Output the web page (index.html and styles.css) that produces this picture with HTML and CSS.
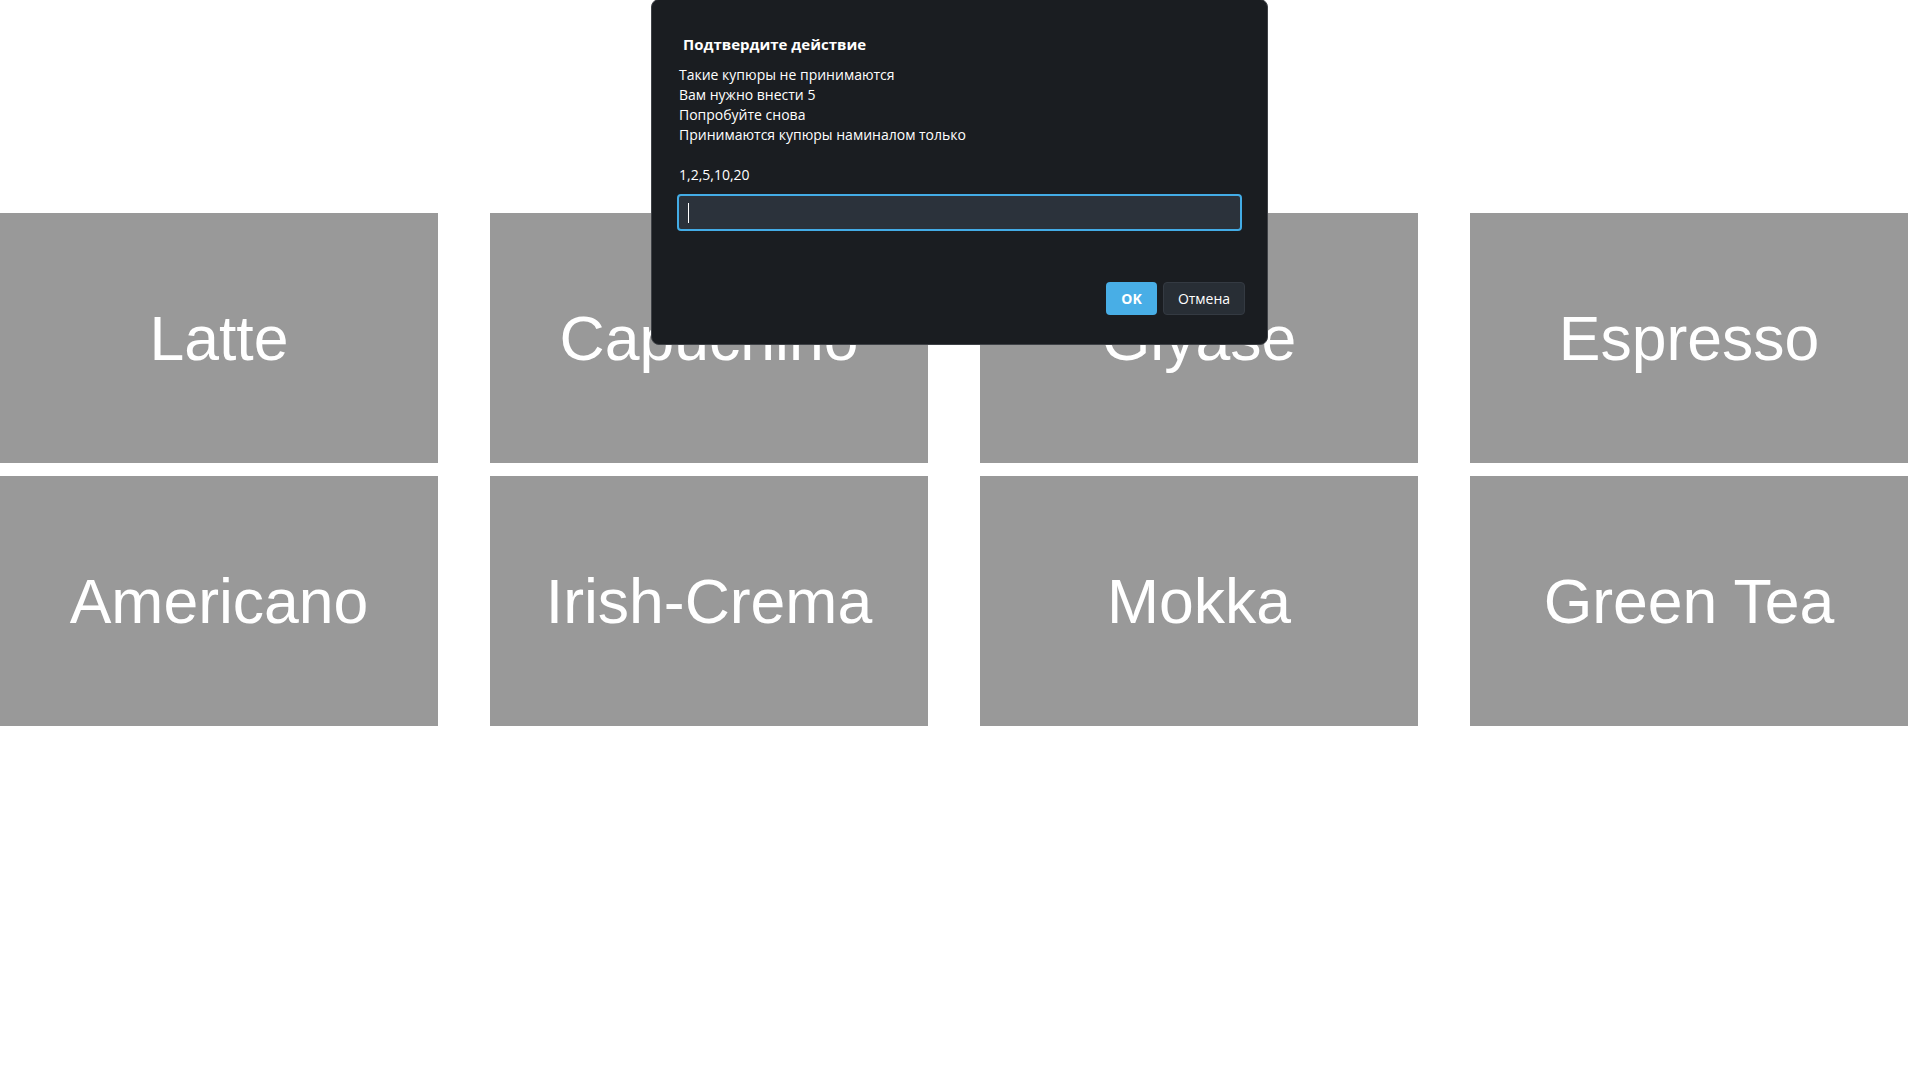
FILE: index.html
```html
<!DOCTYPE html>
<html lang="ru">
<head>
<meta charset="utf-8">
<title>Coffee</title>
<link rel="stylesheet" href="styles.css">
</head>
<body>
<main class="menu">
  <div class="tile">Latte</div>
  <div class="tile">Capuchino</div>
  <div class="tile">Glyase</div>
  <div class="tile">Espresso</div>
  <div class="tile">Americano</div>
  <div class="tile">Irish-Crema</div>
  <div class="tile">Mokka</div>
  <div class="tile">Green Tea</div>
</main>

<div class="dialog" role="dialog">
  <div class="dialog-title">Подтвердите действие</div>
  <div class="dialog-message">Такие купюры не принимаются
Вам нужно внести 5
Попробуйте снова
Принимаются купюры наминалом только

1,2,5,10,20</div>
  <div class="field"><span class="caret"></span></div>
  <div class="dialog-buttons">
    <button class="btn btn-ok">OK</button>
    <button class="btn btn-cancel">Отмена</button>
  </div>
</div>
</body>
</html>
```
FILE: styles.css
```css
html, body {
  margin: 0;
  padding: 0;
  background: #ffffff;
}

.menu {
  padding-top: 213px;
  display: grid;
  grid-template-columns: repeat(4, 438px);
  grid-auto-rows: 250px;
  column-gap: 52px;
  row-gap: 13px;
}

.tile {
  background: #999999;
  color: #ffffff;
  font-family: "Liberation Sans", Arial, sans-serif;
  font-size: 62.5px;
  line-height: 250px;
  text-align: center;
  white-space: nowrap;
  overflow: hidden;
}

.dialog {
  position: fixed;
  top: -1px;
  left: 651px;
  width: 565px;
  padding: 34px 25px 29px 25px;
  background: #1a1d21;
  border: 1px solid #3f4247;
  border-radius: 8px;
  color: #ffffff;
  font-family: "Open Sans", "Noto Sans", sans-serif;
  font-size: 14px;
  line-height: 20px;
}

.dialog-title {
  font-weight: 700;
  font-size: 15px;
  padding-left: 6px;
  margin-bottom: 11px;
}

.dialog-message {
  white-space: pre-wrap;
  padding-left: 2px;
  margin-bottom: 9px;
}

.field {
  height: 33px;
  border: 2px solid #43ace6;
  border-radius: 4px;
  background: #2b323b;
  display: flex;
  align-items: center;
}

.caret {
  display: inline-block;
  width: 1px;
  height: 20px;
  margin-left: 9px;
  background: #ffffff;
}

.dialog-buttons {
  display: flex;
  justify-content: flex-end;
  gap: 6px;
  margin-top: 51px;
  margin-right: -3px;
}

.btn {
  height: 33px;
  border-radius: 4px;
  font-family: "Open Sans", "Noto Sans", sans-serif;
  font-size: 14px;
  color: #ffffff;
  padding: 0;
}

.btn-ok {
  width: 51px;
  background: #48aee6;
  border: none;
  font-weight: 700;
}

.btn-cancel {
  width: 82px;
  background: #282e35;
  border: 1px solid #343a42;
}
```
